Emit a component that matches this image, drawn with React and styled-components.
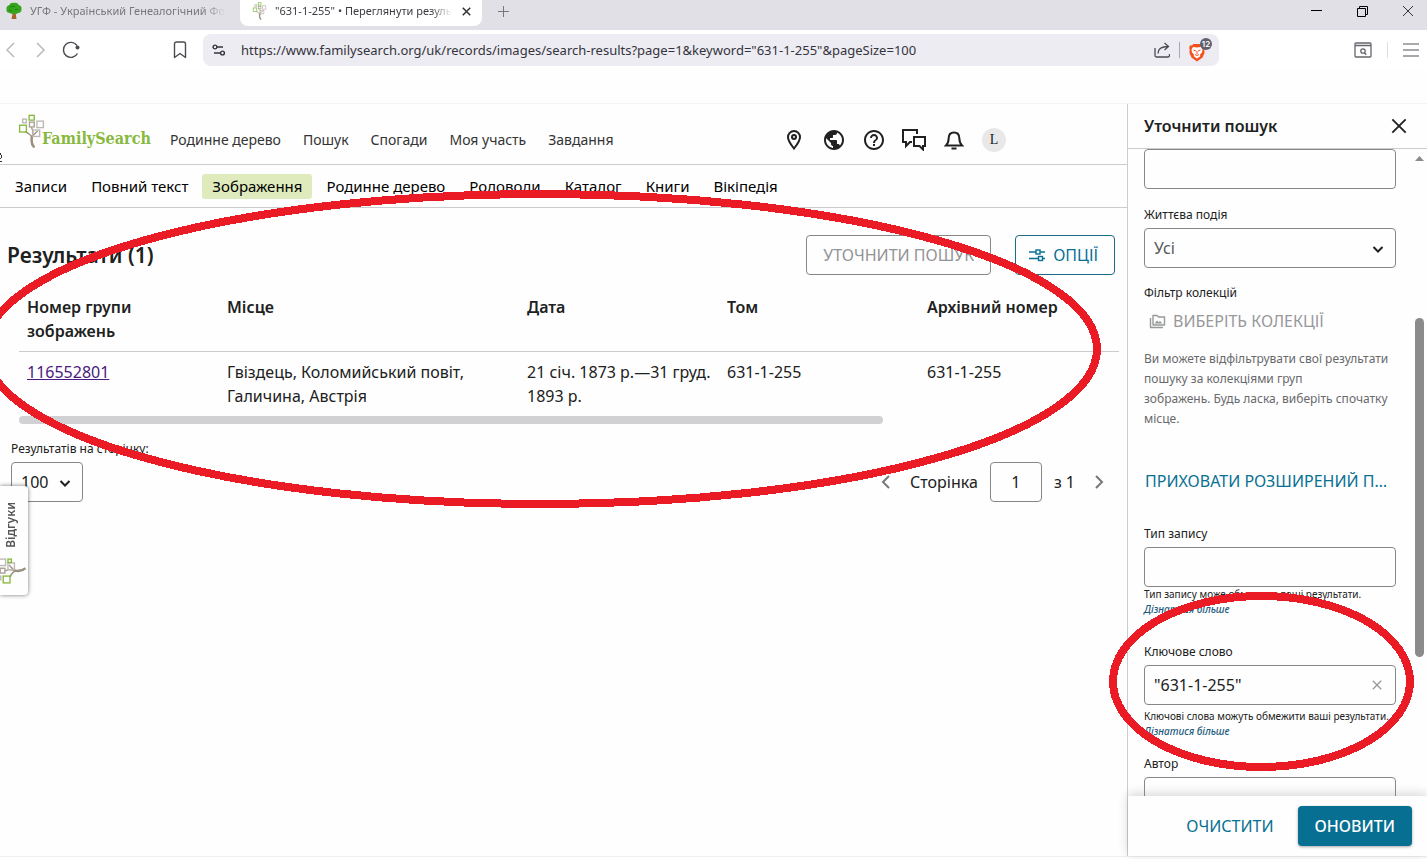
import React, { useState } from "react";
import styled, { createGlobalStyle } from "styled-components";
import { MdPublic, MdHelpOutline, MdClose } from "react-icons/md";

const GlobalStyle = createGlobalStyle`
  * {
    box-sizing: border-box;
  }
  body {
    margin: 0;
    background: #fefefe;
    color: #202121;
    font-family: "Noto Sans", sans-serif;
    font-size: 16px;
    line-height: 24px;
  }
  button, input, select {
    font: inherit;
    color: inherit;
    margin: 0;
  }
  button {
    border: none;
    padding: 0;
    background: none;
    cursor: pointer;
  }
  svg {
    display: block;
    flex-shrink: 0;
  }
`;

const Window = styled.div`
  position: relative;
  display: flex;
  flex-direction: column;
  height: 100vh;
  overflow: hidden;
`;

/* browser frame */

const TabStrip = styled.div`
  display: flex;
  flex-shrink: 0;
  height: 30px;
  background: #e1e0e6;
  font-size: 11px;
  line-height: 22px;
`;

const Tab = styled.div`
  display: flex;
  align-items: center;
  width: ${(props) => (props.$active ? "242px" : "240px")};
  height: 26px;
  padding: 0 8px 4px ${(props) => (props.$active ? "12px" : "6px")};
  border-radius: 0 0 8px 8px;
  background: ${(props) => (props.$active ? "#fff" : "transparent")};
  color: ${(props) => (props.$active ? "#3b3b42" : "#77767d")};
`;

const TabTitle = styled.span`
  flex: 1;
  margin: 0 6px 0 8px;
  overflow: hidden;
  white-space: nowrap;
  mask-image: linear-gradient(to right, #000 88%, transparent);
`;

const TabButton = styled.button`
  display: flex;
  align-items: center;
  justify-content: center;
  width: 16px;
  height: 22px;
  color: ${(props) => (props.$dark ? "#333" : "#77767d")};
`;

const NewTab = styled(TabButton)`
  margin-left: 13px;
`;

const WindowButtons = styled.div`
  display: flex;
  gap: 30px;
  margin-left: auto;
  padding-right: 11px;
`;

const Toolbar = styled.div`
  display: flex;
  align-items: center;
  flex-shrink: 0;
  height: 40px;
  margin-left: -4px;
  padding-right: 7px;
  background: #fff;
`;

const ToolButton = styled.button`
  display: flex;
  align-items: center;
  justify-content: center;
  width: 30px;
  height: 30px;
  color: ${(props) => props.$color || "#4b4b52"};
`;

const Bookmark = styled(ToolButton)`
  margin-left: 79px;
`;

const AddressBar = styled.div`
  display: flex;
  align-items: center;
  flex: 0 1 1016px;
  height: 32px;
  margin: 0 auto 0 8px;
  padding: 0 2px 0 9px;
  border-radius: 8px;
  background: #edecf2;
`;

const Address = styled.input`
  flex: 1;
  min-width: 0;
  height: 30px;
  margin-left: 15px;
  padding: 0;
  border: none;
  outline: none;
  background: none;
  color: #34343c;
  font-size: 13px;
`;

const Divider = styled.span`
  width: 1px;
  height: 16px;
  margin: 0 ${(props) => (props.$spaced ? "14px" : "9px")} 0 9px;
  background: ${(props) => (props.$spaced ? "#dedee2" : "#a9a8b0")};
`;

const ShieldButton = styled.button`
  position: relative;
  width: 28px;
  height: 26px;
  padding-top: 4px;
`;

const ShieldCount = styled.span`
  position: absolute;
  top: 1px;
  left: 11px;
  min-width: 12px;
  height: 12px;
  border-radius: 6px;
  background: #5f6070;
  color: #fff;
  font-family: Inter, sans-serif;
  font-size: 8px;
  font-weight: 600;
  line-height: 12px;
  text-align: center;
`;

/* page */

const Page = styled.div`
  display: flex;
  flex: 1;
  min-height: 0;
  margin-top: 33px;
  margin-bottom: 2px;
  border-top: 1px solid #f3f3f4;
  border-bottom: 1px solid #f0f0f0;
`;

const Main = styled.main`
  flex: 1;
  min-width: 0;
`;

const Header = styled.header`
  display: flex;
  align-items: center;
  height: 61px;
  padding: 0 121px 0 18px;
  border-bottom: 1px solid #cbcccd;
`;

const Brand = styled.a`
  display: flex;
  align-items: flex-start;
  height: 40px;
  width: 134px;
  color: #87b940;
  text-decoration: none;
`;

const BrandName = styled.span`
  margin: 13px 0 0 -3px;
  font-family: "DejaVu Serif Condensed", "DejaVu Serif", serif;
  font-size: 16px;
  font-weight: 700;
`;

const MainNav = styled.nav`
  display: flex;
  gap: 22px;
  margin: 11px auto 0 18px;
  font-size: 14px;
`;

const NavLink = styled.a`
  color: #333;
  text-decoration: none;
  white-space: nowrap;
`;

const HeaderIcons = styled.div`
  display: flex;
  gap: 16px;
  margin-top: 11px;
`;

const IconButton = styled.button`
  display: flex;
  align-items: center;
  justify-content: center;
  width: 24px;
  height: 24px;
`;

const Avatar = styled(IconButton)`
  border-radius: 50%;
  background: #e8e8e8;
  font-family: "Liberation Serif", serif;
  font-size: 14px;
`;

const SubNav = styled.nav`
  display: flex;
  align-items: center;
  gap: 4px;
  height: 43px;
  padding-left: 5px;
  border-bottom: 1px solid #cbcccd;
  font-size: 15px;
`;

const SubNavLink = styled.a`
  padding: 0 10px;
  border-radius: 3px;
  background: ${(props) => (props.$active ? "#dfebbd" : "transparent")};
  color: #000;
  line-height: 25px;
  text-decoration: none;
  white-space: nowrap;
`;

const ResultsHead = styled.div`
  display: flex;
  align-items: center;
  gap: 24px;
  margin-top: 27px;
  padding: 0 12px 0 7px;
`;

const Title = styled.h1`
  margin: 0 auto 0 0;
  font-size: 21px;
  font-weight: 600;
`;

const Button = styled.button`
  display: flex;
  align-items: center;
  justify-content: center;
  gap: 8px;
  height: 40px;
  padding: 0 16px 0 ${(props) => (props.$icon ? "13px" : "16px")};
  border: 1px solid ${(props) => props.$border || "transparent"};
  border-radius: 4px;
  background: ${(props) => props.$fill || "transparent"};
  box-shadow: ${(props) =>
    props.$fill ? "0 1px 3px rgba(0, 0, 0, 0.35)" : "none"};
  color: ${(props) => props.$color};
  font-weight: ${(props) => (props.$fill ? 500 : 400)};
  white-space: nowrap;
`;

const TableArea = styled.div`
  margin: 12px 8px 0 19px;
  overflow: hidden;
`;

const Table = styled.table`
  width: 100%;
  border-collapse: collapse;
  table-layout: fixed;
`;

const HeadCell = styled.th`
  width: ${(props) => props.$width || "auto"};
  padding: 8px;
  border-bottom: 1px solid #cbcccd;
  font-weight: 600;
  text-align: left;
  vertical-align: top;
`;

const Cell = styled.td`
  padding: 8px;
  vertical-align: top;
`;

const GroupLink = styled.a`
  color: #4a1a7c;
`;

const ScrollBar = styled.div`
  width: 864px;
  max-width: 100%;
  height: 8px;
  border-radius: 4px;
  background: #d1d1d3;
`;

const Paging = styled.div`
  display: flex;
  align-items: flex-end;
  justify-content: space-between;
  margin-top: 17px;
  padding: 0 16px 0 11px;
`;

const Label = styled.label`
  display: block;
  font-size: 12px;
  line-height: 16px;
`;

const SelectBox = styled.div`
  position: relative;
  width: ${(props) => props.$width || "100%"};
  margin-top: 5px;
`;

const Select = styled.select`
  display: block;
  width: 100%;
  height: 40px;
  padding: 0 9px;
  appearance: none;
  border: 1px solid #878787;
  border-radius: 4px;
  background: transparent;
  color: ${(props) => props.$color || "inherit"};
`;

const SelectArrow = styled.span`
  position: absolute;
  top: 12px;
  right: 9px;
  pointer-events: none;
`;

const Pager = styled.div`
  display: flex;
  align-items: center;
  gap: 12px;
`;

const PagerLabel = styled.label`
  display: flex;
  align-items: center;
  gap: 12px;
`;

const PageInput = styled.input`
  width: 52px;
  height: 40px;
  border: 1px solid #878787;
  border-radius: 4px;
  background: transparent;
  text-align: center;
`;

/* refine panel */

const Panel = styled.aside`
  display: flex;
  flex-direction: column;
  flex-shrink: 0;
  width: 300px;
  border-left: 1px solid #cbcccd;
`;

const PanelHead = styled.div`
  display: flex;
  align-items: center;
  justify-content: space-between;
  height: 45px;
  flex-shrink: 0;
  padding: 0 16px;
  border-bottom: 1px solid #cbcccd;
`;

const PanelTitle = styled.h2`
  margin: 0;
  font-size: 16px;
  font-weight: 600;
`;

const PanelBody = styled.div`
  display: flex;
  flex: 1;
  min-height: 0;
  overflow: hidden;
`;

const Form = styled.form`
  flex: 1;
  min-width: 0;
  padding: 0 19px 0 16px;
`;

const Field = styled.div`
  margin-top: ${(props) => props.$top || "0"};
`;

const TextBox = styled.div`
  position: relative;
  margin-top: 5px;
`;

const TextInput = styled.input`
  display: block;
  width: 100%;
  height: 40px;
  padding: 0 9px;
  border: 1px solid #878787;
  border-radius: 4px;
  background: transparent;
`;

const ClearButton = styled.button`
  position: absolute;
  top: 12px;
  right: 11px;
  color: #9a9a9a;
`;

const CollectionButton = styled.button`
  display: flex;
  align-items: center;
  gap: 7px;
  height: 40px;
  padding-left: 5px;
  color: #97989a;
  white-space: nowrap;
`;

const Note = styled.p`
  margin: 8px 0 0;
  color: #68696b;
  font-size: 12px;
  line-height: 20px;
`;

const ToggleLink = styled.button`
  display: block;
  width: 100%;
  height: 40px;
  margin-top: 32px;
  padding: 0 8px 0 1px;
  overflow: hidden;
  color: #087092;
  text-align: left;
  text-overflow: ellipsis;
  white-space: nowrap;
`;

const Help = styled.div`
  margin-top: ${(props) => props.$top || "0"};
  font-size: 10px;
  line-height: 15px;
  white-space: nowrap;
`;

const HelpLink = styled.a`
  display: block;
  color: #1e5c7e;
  font-style: italic;
  font-weight: 500;
  text-decoration: none;
`;

const Track = styled.div`
  width: 12px;
  padding-top: 7px;
`;

const Thumb = styled.div`
  width: 9px;
  height: 339px;
  margin-top: 157px;
  border-radius: 5px;
  background: #8b8b8b;
`;

const PanelFoot = styled.div`
  display: flex;
  align-items: center;
  justify-content: flex-end;
  gap: 7px;
  height: 60px;
  flex-shrink: 0;
  padding-right: 15px;
  background: #fefefe;
  box-shadow: 0 -2px 10px rgba(0, 0, 0, 0.16);
`;

/* things that float over the page */

const FeedbackTab = styled.button`
  position: absolute;
  top: 486px;
  left: 0;
  display: flex;
  flex-direction: column;
  align-items: flex-start;
  justify-content: space-between;
  width: 28px;
  height: 109px;
  padding: 16px 0 11px;
  border-radius: 0 4px 4px 0;
  background: #fefefe;
  box-shadow: 0 0 4px rgba(0, 0, 0, 0.55);
  overflow: hidden;
`;

const FeedbackText = styled.span`
  width: 22px;
  color: #555;
  font-size: 12px;
  font-weight: 600;
  line-height: 22px;
  writing-mode: vertical-rl;
  transform: rotate(180deg);
`;

const FeedbackMark = styled.span`
  margin-left: -8px;
`;

const Marks = styled.svg`
  position: absolute;
  top: 0;
  left: 0;
  pointer-events: none;
`;

const TreeMark = ({ width, height, turned }) => (
  <svg
    width={width}
    height={height}
    viewBox={turned ? "0 0 100 76" : "0 0 76 100"}
    fill="none"
    strokeWidth="4"
  >
    <g transform={turned ? "translate(0 76) rotate(-90)" : undefined}>
      <path
        d="M47 98C37 86 38 74 41 61C43 52 41 44 38 39M40 70C34 60 27 55 19 52M40 66C44 60 50 56 56 50"
        stroke="#9b8f7f"
      />
      <path d="M46 98C35 86 37 75 40 65" stroke="#9b8f7f" strokeWidth="7" />
      <rect x="31" y="4" width="15" height="14" stroke="#87b940" />
      <rect x="3" y="33" width="20" height="20" stroke="#87b940" />
      <rect x="12" y="15" width="11" height="11" stroke="#bdb8b4" />
      <rect x="32" y="24" width="14" height="14" stroke="#a79e94" />
      <rect x="54" y="21" width="19" height="19" stroke="#bdb8b4" />
      <rect x="42" y="47" width="20" height="19" stroke="#bdb8b4" />
      {turned && (
        <rect x="63" y="47" width="10" height="10" stroke="#87b940" />
      )}
    </g>
  </svg>
);

const OakIcon = () => (
  <svg width="16" height="18" viewBox="0 0 16 18">
    <path d="M7 10h2.500l1 7h-5z" fill="#a5642a" />
    <path
      d="M8 1c2-.6 4 .3 4.500 1.800C14.500 3.500 16 5 15.500 7c.3 2.500-1.500 4-3.500 4-1.500 1.200-3 1-4 .5-1.500.8-3.500.4-4-.5C1.500 11 0 9.500.5 7.500 0 5 1.500 3.500 3.500 3 4 1.500 6 .5 8 1z"
      fill="#36a51d"
    />
    <path d="M4 5l3-1 2 1M9 8l3-1M3 8l3 1" stroke="#1f7e14" fill="none" />
  </svg>
);

const Chevron = ({ dir, color = "currentColor" }) => {
  const paths = {
    left: "M12 3L6 9l6 6",
    right: "M6 3l6 6-6 6",
    down: "M4.500 7L9 11.500 13.500 7",
  };
  return (
    <svg width="18" height="18" viewBox="0 0 18 18" fill="none">
      <path d={paths[dir]} stroke={color} strokeWidth="2" />
    </svg>
  );
};

const CrossIcon = ({ size, width = 1 }) => (
  <svg width={size} height={size} viewBox="0 0 12 12" fill="none">
    <path d="M1 1l10 10M11 1L1 11" stroke="currentColor" strokeWidth={width} />
  </svg>
);

const ReloadIcon = () => (
  <svg width="18" height="18" viewBox="0 0 18 18" fill="none">
    <path
      d="M15 4.500A7.500 7.500 0 1 0 15.500 12.500"
      stroke="currentColor"
      strokeWidth="1.400"
    />
    <circle cx="15.500" cy="6.500" r="2" fill="currentColor" />
  </svg>
);

const BookmarkIcon = () => (
  <svg width="14" height="18" viewBox="0 0 14 18" fill="none">
    <path
      d="M1.500 3a2 2 0 0 1 2-2h7a2 2 0 0 1 2 2v13.500L7 12.500l-5.500 4z"
      stroke="currentColor"
      strokeWidth="1.400"
      strokeLinejoin="round"
    />
  </svg>
);

const SiteIcon = () => (
  <svg width="14" height="12" viewBox="0 0 14 12" fill="none">
    <g stroke="#33333b" strokeWidth="1.400">
      <circle cx="3" cy="3" r="1.900" />
      <path d="M5 3h6M2 9h6" />
      <circle cx="10.500" cy="9" r="1.900" />
    </g>
  </svg>
);

const ShareIcon = () => (
  <svg width="16" height="16" viewBox="0 0 16 16" fill="none">
    <path
      d="M1 6v7.500a1.500 1.500 0 0 0 1.500 1.500H14a1.500 1.500 0 0 0 1.500-1.500V12M4 11.500C4 7 7 4.500 14 4.500M10.500 1l4 3.500-4 3.500"
      stroke="#4b4b52"
      strokeWidth="1.300"
    />
  </svg>
);

const LionIcon = () => (
  <svg width="16" height="19" viewBox="0 0 16 19">
    <path
      d="M4.500 1h7l1.500 1.500 2-.2.800 2.700-.5 1.500.2 3.500-2 4.500L8 18.500 2.500 14.500.5 10l.2-3.500L.2 5 1 2.300l2 .2z"
      fill="#f4501e"
    />
    <path
      d="M4 4l4 .6 4-.6 1.500 2.500-.5 3-2 2 .3 1.800L8 15.500l-3.300-2.200.3-1.800-2-2-.5-3z"
      fill="#fff"
    />
    <path
      d="M4.500 7l2.500 1M11.500 7L9 8M8 8v3M6 11.500l2 1 2-1"
      stroke="#f4501e"
      fill="none"
    />
  </svg>
);

const SearchTabsIcon = () => (
  <svg width="18" height="16" viewBox="0 0 18 16" fill="none">
    <g stroke="#66666c" strokeWidth="1.300">
      <rect x="1" y="1" width="16" height="14" rx="1" />
      <path d="M1 3.500h16M10.300 10.800l2 2" />
      <circle cx="9" cy="9" r="2.200" />
    </g>
  </svg>
);

const MenuIcon = () => (
  <svg width="18" height="16" viewBox="0 0 18 16">
    <path d="M1 2h16M1 8h16M1 14h16" stroke="#8d8d92" strokeWidth="1.500" />
  </svg>
);

const PinIcon = () => (
  <svg width="16" height="22" viewBox="0 0 16 22" fill="none">
    <g stroke="currentColor" strokeWidth="2">
      <path d="M8 2a6 6 0 0 0-6 6.200C2 12 5 15.500 8 19.500c3-4 6-7.500 6-11.300A6 6 0 0 0 8 2z" />
      <circle cx="8" cy="8" r="2" />
    </g>
  </svg>
);

const BellIcon = () => (
  <svg width="20" height="20" viewBox="0 0 20 20" fill="none">
    <g stroke="currentColor" strokeWidth="2">
      <path d="M2 15.500h16c-2-2-2.600-3.500-2.700-7.500C15.200 4.500 13 2.500 10 2.500S4.800 4.500 4.700 8C4.600 12 4 13.500 2 15.500z" />
      <path d="M7.500 18.500h5" />
    </g>
  </svg>
);

const ChatIcon = () => (
  <svg width="24" height="22" viewBox="0 0 24 22" fill="none">
    <g stroke="currentColor" strokeWidth="2">
      <path d="M15 5V1H1v12h3v4l4-4h2" />
      <path d="M12 8h11v9h-2v3.500L17.500 17H12z" />
    </g>
  </svg>
);

const TuneIcon = () => (
  <svg width="16" height="14" viewBox="0 0 16 14" fill="none">
    <g stroke="currentColor" strokeWidth="1.400">
      <path d="M0 4h7M11 4h5M0 10.500h9M14 10.500h2" />
      <rect x="7" y="2" width="4" height="4" />
      <rect x="9.500" y="8.500" width="4" height="4" />
    </g>
  </svg>
);

const CollectionIcon = () => (
  <svg width="17" height="15" viewBox="0 0 17 15" fill="none">
    <g stroke="currentColor" strokeWidth="1.400" strokeLinejoin="round">
      <path d="M4 1.500h4l1.500 1.500H15.500v8H4z" />
      <path d="M1.500 4v9.500H14" />
    </g>
    <path
      d="M5.500 9.500l2.500-3 1.500 1.700 1.500-1.200 2.500 2.500z"
      fill="currentColor"
    />
  </svg>
);

const navItems = ["Родинне дерево", "Пошук", "Спогади", "Моя участь", "Завдання"];

const subNavItems = [
  "Записи",
  "Повний текст",
  "Зображення",
  "Родинне дерево",
  "Родоводи",
  "Каталог",
  "Книги",
  "Вікіпедія",
];

const columns = [
  { title: "Номер групи зображень", width: "200px" },
  { title: "Місце", width: "300px" },
  { title: "Дата", width: "200px" },
  { title: "Том", width: "200px" },
  { title: "Архівний номер" },
];

const Browser = () => (
  <>
    <TabStrip>
      <Tab>
        <OakIcon />
        <TabTitle>УГФ - Український Генеалогічний Форум</TabTitle>
      </Tab>
      <Tab $active>
        <TreeMark width={15} height={18} />
        <TabTitle>"631-1-255" • Переглянути результати</TabTitle>
        <TabButton $dark aria-label="Закрити вкладку">
          <CrossIcon size={9} width={2} />
        </TabButton>
      </Tab>
      <NewTab aria-label="Нова вкладка">
        <svg width="11" height="11" viewBox="0 0 11 11">
          <path d="M5.500 0v11M0 5.500h11" stroke="currentColor" />
        </svg>
      </NewTab>
      <WindowButtons>
        <TabButton $dark aria-label="Згорнути">
          <svg width="11" height="11" viewBox="0 0 11 11">
            <path d="M0 4.500h11" stroke="#000" />
          </svg>
        </TabButton>
        <TabButton $dark aria-label="Розгорнути">
          <svg width="11" height="11" viewBox="0 0 11 11" fill="none">
            <path d="M.5 2.500h8v8h-8zM2.500 2.500v-2h8v8h-2" stroke="#000" />
          </svg>
        </TabButton>
        <TabButton $dark aria-label="Закрити">
          <CrossIcon size={12} />
        </TabButton>
      </WindowButtons>
    </TabStrip>
    <Toolbar>
      <ToolButton $color="#b9b9be" aria-label="Назад">
        <svg width="10" height="18" viewBox="0 0 10 18" fill="none">
          <path d="M8 2L1 9l7 7" stroke="currentColor" strokeWidth="1.500" />
        </svg>
      </ToolButton>
      <ToolButton $color="#b9b9be" aria-label="Вперед">
        <svg width="10" height="18" viewBox="0 0 10 18" fill="none">
          <path d="M1 2l7 7-7 7" stroke="currentColor" strokeWidth="1.500" />
        </svg>
      </ToolButton>
      <ToolButton aria-label="Оновити сторінку">
        <ReloadIcon />
      </ToolButton>
      <Bookmark aria-label="Закладка">
        <BookmarkIcon />
      </Bookmark>
      <AddressBar>
        <SiteIcon />
        <Address
          aria-label="Адреса"
          defaultValue={
            'https://www.familysearch.org/uk/records/images/search-results?page=1&keyword="631-1-255"&pageSize=100'
          }
        />
        <ShareIcon />
        <Divider />
        <ShieldButton aria-label="Щити">
          <LionIcon />
          <ShieldCount>12</ShieldCount>
        </ShieldButton>
      </AddressBar>
      <ToolButton aria-label="Пошук вкладок">
        <SearchTabsIcon />
      </ToolButton>
      <Divider $spaced />
      <MenuIcon />
    </Toolbar>
  </>
);

const Results = () => (
  <>
    <ResultsHead>
      <Title>Результати (1)</Title>
      <Button $border="#878787" $color="#929395">
        УТОЧНИТИ ПОШУК
      </Button>
      <Button $icon $border="#1b6b85" $color="#087092">
        <TuneIcon />
        ОПЦІЇ
      </Button>
    </ResultsHead>
    <TableArea>
      <Table>
        <thead>
          <tr>
            {columns.map((column) => (
              <HeadCell key={column.title} $width={column.width}>
                {column.title}
              </HeadCell>
            ))}
          </tr>
        </thead>
        <tbody>
          <tr>
            <Cell>
              <GroupLink href="#116552801">116552801</GroupLink>
            </Cell>
            <Cell>Гвіздець, Коломийський повіт, Галичина, Австрія</Cell>
            <Cell>21 січ. 1873 р.—31 груд. 1893 р.</Cell>
            <Cell>631-1-255</Cell>
            <Cell>631-1-255</Cell>
          </tr>
        </tbody>
      </Table>
      <ScrollBar />
    </TableArea>
    <Paging>
      <div>
        <Label htmlFor="pageSize">Результатів на сторінку:</Label>
        <SelectBox $width="72px">
          <Select id="pageSize" defaultValue="100">
            <option>100</option>
            <option>50</option>
          </Select>
          <SelectArrow>
            <Chevron dir="down" />
          </SelectArrow>
        </SelectBox>
      </div>
      <Pager>
        <IconButton aria-label="Попередня">
          <Chevron dir="left" color="#77787a" />
        </IconButton>
        <PagerLabel>
          Сторінка
          <PageInput defaultValue="1" />
        </PagerLabel>
        <span>з 1</span>
        <IconButton aria-label="Наступна">
          <Chevron dir="right" color="#77787a" />
        </IconButton>
      </Pager>
    </Paging>
  </>
);

const RefinePanel = () => {
  const [keyword, setKeyword] = useState('"631-1-255"');

  return (
    <Panel>
      <PanelHead>
        <PanelTitle>Уточнити пошук</PanelTitle>
        <IconButton aria-label="Закрити">
          <CrossIcon size={16} width={1.4} />
        </IconButton>
      </PanelHead>
      <PanelBody>
        <Form id="refine" onSubmit={(e) => e.preventDefault()}>
          <TextInput aria-label="Рік" />
          <Field $top="18px">
            <Label htmlFor="event">Життєва подія</Label>
            <SelectBox>
              <Select id="event" $color="#58595b" defaultValue="Усі">
                <option>Усі</option>
              </Select>
              <SelectArrow>
                <Chevron dir="down" />
              </SelectArrow>
            </SelectBox>
          </Field>
          <Field $top="17px">
            <Label as="div">Фільтр колекцій</Label>
            <CollectionButton type="button">
              <CollectionIcon />
              ВИБЕРІТЬ КОЛЕКЦІЇ
            </CollectionButton>
            <Note>
              Ви можете відфільтрувати свої результати пошуку за колекціями груп
              <br />
              зображень. Будь ласка, виберіть спочатку місце.
            </Note>
          </Field>
          <ToggleLink type="button">ПРИХОВАТИ РОЗШИРЕНИЙ ПОШУК</ToggleLink>
          <Field $top="25px">
            <Label htmlFor="recordType">Тип запису</Label>
            <TextBox>
              <TextInput id="recordType" />
            </TextBox>
            <Help>
              Тип запису може обмежити ваші результати.
              <HelpLink href="#record-type">Дізнатися більше</HelpLink>
            </Help>
          </Field>
          <Field $top="27px">
            <Label htmlFor="keyword">Ключове слово</Label>
            <TextBox>
              <TextInput
                id="keyword"
                value={keyword}
                onChange={(e) => setKeyword(e.target.value)}
              />
              <ClearButton
                type="button"
                aria-label="Очистити поле"
                onClick={() => setKeyword("")}
              >
                <MdClose size={16} />
              </ClearButton>
            </TextBox>
            <Help $top="4px">
              Ключові слова можуть обмежити ваші результати.
              <HelpLink href="#keyword">Дізнатися більше</HelpLink>
            </Help>
          </Field>
          <Field $top="17px">
            <Label htmlFor="author">Автор</Label>
            <TextBox>
              <TextInput id="author" />
            </TextBox>
          </Field>
        </Form>
        <Track>
          <svg width="9" height="5" viewBox="0 0 9 5">
            <path d="M0 5L4.500 0 9 5z" fill="#8b8b8b" />
          </svg>
          <Thumb />
        </Track>
      </PanelBody>
      <PanelFoot>
        <Button $color="#087092" onClick={() => setKeyword("")}>
          ОЧИСТИТИ
        </Button>
        <Button $fill="#066f92" $color="#fff" type="submit" form="refine">
          ОНОВИТИ
        </Button>
      </PanelFoot>
    </Panel>
  );
};

const App = () => {
  return (
    <Window>
      <GlobalStyle />
      <Browser />
      <Page>
        <Main>
          <Header>
            <Brand href="#home">
              <TreeMark width={27} height={34} />
              <BrandName>FamilySearch</BrandName>
            </Brand>
            <MainNav>
              {navItems.map((item) => (
                <NavLink href="#nav" key={item}>
                  {item}
                </NavLink>
              ))}
            </MainNav>
            <HeaderIcons>
              <IconButton aria-label="Місця">
                <PinIcon />
              </IconButton>
              <IconButton aria-label="Мова">
                <MdPublic size={24} />
              </IconButton>
              <IconButton aria-label="Довідка">
                <MdHelpOutline size={24} />
              </IconButton>
              <IconButton aria-label="Повідомлення">
                <ChatIcon />
              </IconButton>
              <IconButton aria-label="Сповіщення">
                <BellIcon />
              </IconButton>
              <Avatar>L</Avatar>
            </HeaderIcons>
          </Header>
          <SubNav>
            {subNavItems.map((item) => (
              <SubNavLink
                href="#search"
                key={item}
                $active={item === "Зображення"}
              >
                {item}
              </SubNavLink>
            ))}
          </SubNav>
          <Results />
        </Main>
        <RefinePanel />
      </Page>
      <FeedbackTab>
        <FeedbackText>Відгуки</FeedbackText>
        <FeedbackMark>
          <TreeMark width={34} height={26} turned />
        </FeedbackMark>
      </FeedbackTab>
      <Marks width="1427" height="859" fill="none" shapeRendering="crispEdges">
        <path d="M0 153l2 4-1 1H0M0 161l2 0" stroke="#333" />
        <g stroke="#ea1b24" strokeWidth="8">
          <ellipse cx="541" cy="349" rx="556" ry="155" />
          <ellipse cx="1261.500" cy="681.500" rx="148.500" ry="85.500" />
        </g>
      </Marks>
    </Window>
  );
};

export default App;
